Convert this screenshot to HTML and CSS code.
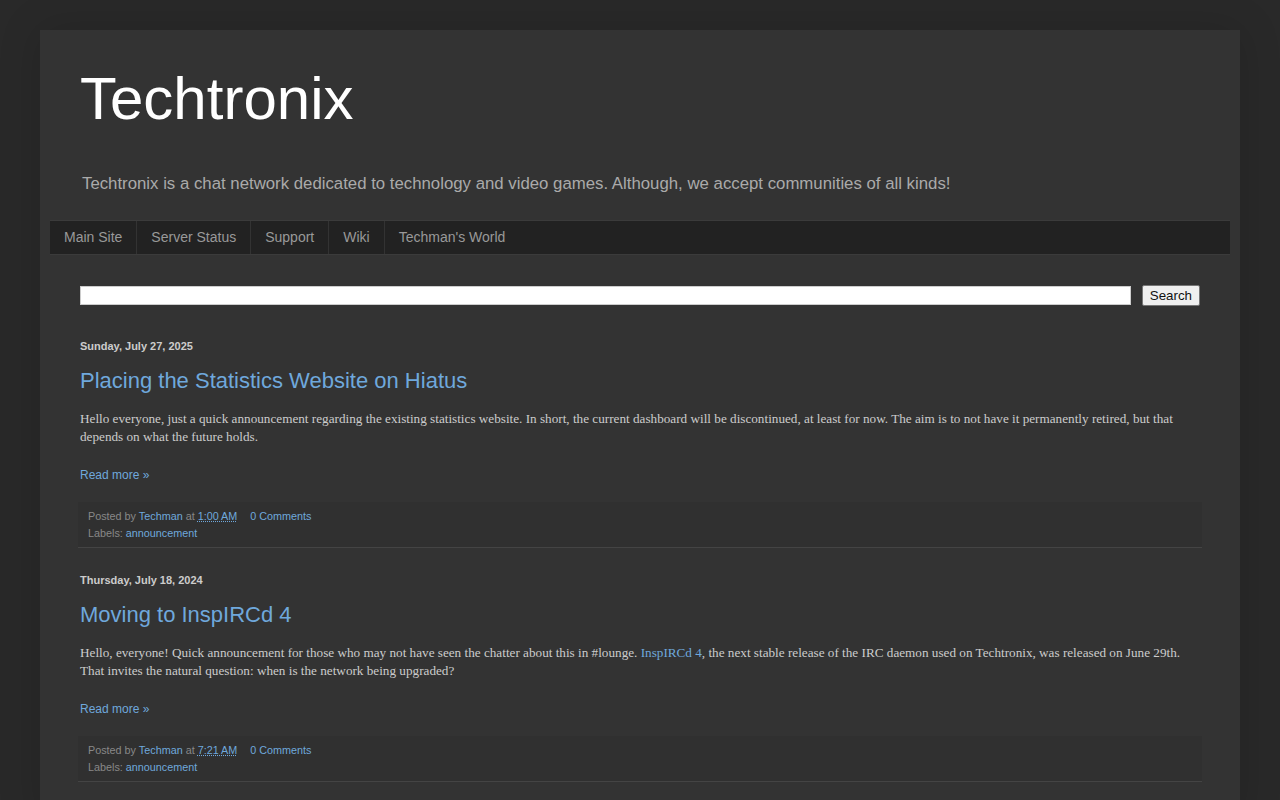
FILE: index.html
```html
<!DOCTYPE html>
<html lang="en">
<head>
    <meta charset="UTF-8">
    <meta name="viewport" content="width=device-width, initial-scale=1.0">
    <title>Techtronix</title>
    <link rel="stylesheet" href="styles.css">
</head>
<body>
    <div class="page">
        <header class="header">
            <h1 class="site-title">Techtronix</h1>
            <p class="site-desc">Techtronix is a chat network dedicated to technology and video games. Although, we accept communities of all kinds!</p>
        </header>

        <nav class="tabs">
            <a href="#">Main Site</a>
            <a href="#">Server Status</a>
            <a href="#">Support</a>
            <a href="#">Wiki</a>
            <a href="#">Techman's World</a>
        </nav>

        <main class="main">
            <form class="search" onsubmit="return false;">
                <input type="text" class="search-input">
                <button type="submit" class="search-btn">Search</button>
            </form>

            <article class="post">
                <h2 class="date-header">Sunday, July 27, 2025</h2>
                <h3 class="post-title"><a href="#">Placing the Statistics Website on Hiatus</a></h3>
                <div class="post-body">
                    Hello everyone, just a quick announcement regarding the existing statistics website. In short, the current dashboard will be discontinued, at least for now. The aim is to not have it permanently retired, but that depends on what the future holds.
                </div>
                <div class="jump-link"><a href="#">Read more &raquo;</a></div>
                <div class="post-footer">
                    <div>Posted by <a href="#">Techman</a> at <a href="#" class="timestamp">1:00 AM</a> <a href="#" class="comments">0 Comments</a></div>
                    <div>Labels: <a href="#">announcement</a></div>
                </div>
            </article>

            <article class="post">
                <h2 class="date-header">Thursday, July 18, 2024</h2>
                <h3 class="post-title"><a href="#">Moving to InspIRCd 4</a></h3>
                <div class="post-body">
                    Hello, everyone! Quick announcement for those who may not have seen the chatter about this in #lounge. <a href="#">InspIRCd 4</a>, the next stable release of the IRC daemon used on Techtronix, was released on June 29th. That invites the natural question: when is the network being upgraded?
                </div>
                <div class="jump-link"><a href="#">Read more &raquo;</a></div>
                <div class="post-footer">
                    <div>Posted by <a href="#">Techman</a> at <a href="#" class="timestamp">7:21 AM</a> <a href="#" class="comments">0 Comments</a></div>
                    <div>Labels: <a href="#">announcement</a></div>
                </div>
            </article>
        </main>
    </div>
</body>
</html>
```

FILE: styles.css
```css
body {
    margin: 0;
    background-color: #292929;
    font-family: "Liberation Sans", Arial, sans-serif;
    color: #dddddd;
}
a {
    color: #6fa8dc;
    text-decoration: none;
}
.page {
    width: 1200px;
    margin: 30px auto 0;
    background-color: #333333;
    box-shadow: 0 0 40px rgba(0,0,0,0.15);
    padding-bottom: 40px;
}
.header {
    padding: 34px 40px 0;
}
.site-title {
    margin: 0;
    font-size: 60px;
    font-weight: normal;
    line-height: 69px;
    color: #ffffff;
}
.site-desc {
    margin: 41px 0 0 2px;
    font-size: 16.8px;
    line-height: 20px;
    color: #aaaaaa;
}
.tabs {
    display: flex;
    margin: 26px 10px 0;
    background-color: #222222;
    border-top: 1px solid #3b3b3b;
    border-bottom: 1px solid #3b3b3b;
}
.tabs a {
    padding: 8px 14px 9px;
    font-size: 14px;
    line-height: 16px;
    color: #999999;
    border-left: 1px solid #333333;
}
.tabs a:first-child {
    border-left: none;
}
.main {
    padding: 30px 40px 0;
}
.search {
    display: flex;
    align-items: center;
    gap: 11px;
}
.search-input {
    flex: 1;
    height: 19px;
    box-sizing: border-box;
    border: 1px solid #cccccc;
    background: #ffffff;
    padding: 0 2px;
}
.search-btn {
    font-family: "Liberation Sans", Arial, sans-serif;
    font-size: 13.33px;
    height: 21px;
    padding: 0 7px;
    background-color: #efefef;
    border: 1px solid #767676;
    border-radius: 2px;
    color: #111111;
}
.post {
    margin-top: 33px;
}
.post + .post {
    margin-top: 25px;
}
.date-header {
    margin: 0;
    font-size: 11px;
    font-weight: bold;
    line-height: 14px;
    color: #cccccc;
}
.post-title {
    margin: 14px 0 0;
    font-size: 22px;
    font-weight: normal;
    line-height: 27px;
}
.post-body {
    margin-top: 16px;
    font-family: "Liberation Serif", "Times New Roman", serif;
    font-size: 13.2px;
    line-height: 1.4;
    color: #cccccc;
}
.jump-link {
    margin-top: 20px;
    font-size: 12px;
    line-height: 16px;
}
.post-footer {
    margin: 19px -2px 0;
    padding: 6px 10px 5px;
    background-color: #303030;
    border-bottom: 1px solid #444444;
    font-size: 10.8px;
    line-height: 17px;
    color: #888888;
}
.timestamp {
    text-decoration: underline dotted;
}
.comments {
    margin-left: 10px;
}
```
